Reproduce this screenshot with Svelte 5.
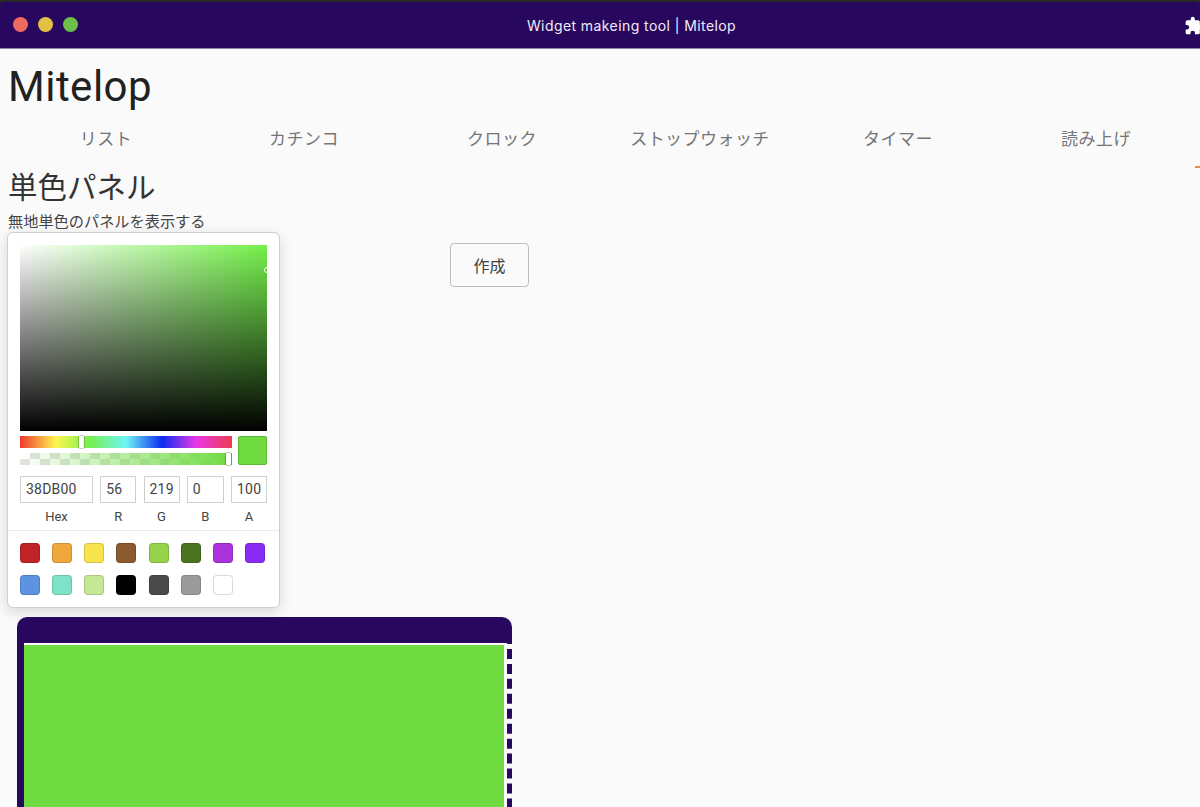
<script>
  const tabs = ["リスト", "カチンコ", "クロック", "ストップウォッチ", "タイマー", "読み上げ"];
  const swatches = [
    "#c02428", "#f0a83c", "#f8e44c", "#8b5a2f", "#94d34a", "#4a7420", "#ac32dc", "#8a2cf6",
    "#5c94e2", "#7ee3c6", "#c4e896", "#000000", "#4a4a4a", "#9b9b9b", "#ffffff",
  ];
  const fields = [
    { label: "Hex", value: "38DB00", width: 73 },
    { label: "R", value: "56", width: 36 },
    { label: "G", value: "219", width: 36 },
    { label: "B", value: "0", width: 37 },
    { label: "A", value: "100", width: 36 },
  ];
</script>

<div class="window">
  <header class="titlebar">
    <div class="lights">
      <span class="light red"></span>
      <span class="light yellow"></span>
      <span class="light green"></span>
    </div>
    <span class="wintitle">Widget makeing tool | Mitelop</span>
    <svg class="puzzle" viewBox="0 0 24 24" width="24" height="24">
      <path fill="#fff" d="M20.5 11H19V7c0-1.1-.9-2-2-2h-4V3.5a2.5 2.5 0 0 0-5 0V5H4c-1.100 0-2 .9-2 2v3.800h1.500a2.700 2.700 0 0 1 0 5.400H2V20c0 1.100.9 2 2 2h3.800v-1.500a2.700 2.700 0 0 1 5.400 0V22H17c1.100 0 2-.9 2-2v-4h1.500a2.500 2.500 0 0 0 0-5z" />
    </svg>
  </header>

  <main class="page">
    <h1>Mitelop</h1>

    <nav class="tabs">
      {#each tabs as t}
        <div class="tab">{t}</div>
      {/each}
    </nav>
    <div class="indicator-track"><span class="indicator"></span></div>

    <section class="panel">
      <h2>単色パネル</h2>
      <p class="desc">無地単色のパネルを表示する</p>

      <div class="actions">
        <button class="create">作成</button>
      </div>

      <div class="preview">
        <div class="preview-head"></div>
        <div class="preview-body">
          <div class="preview-fill"></div>
        </div>
      </div>

      <div class="picker">
        <div class="sat">
          <div class="sat-white"></div>
          <div class="sat-black"></div>
          <span class="sat-pointer"></span>
        </div>

        <div class="sliders">
          <div class="bars">
            <div class="hue"><span class="thumb hue-thumb"></span></div>
            <div class="alpha">
              <div class="alpha-fill"></div>
              <span class="thumb alpha-thumb"></span>
            </div>
          </div>
          <div class="current"></div>
        </div>

        <div class="fields">
          {#each fields as f}
            <div class="field" style="width: {f.width}px">
              <div class="field-input">{f.value}</div>
              <div class="field-label">{f.label}</div>
            </div>
          {/each}
        </div>

        <div class="presets">
          {#each swatches as c}
            <span class="swatch" style="background: {c}"></span>
          {/each}
        </div>
      </div>
    </section>
  </main>
</div>

<style>
  :global(body) {
    margin: 0;
    background: #2a2a2a;
    overflow: hidden;
  }
  .window {
    height: 807px;
    padding-top: 2px;
    box-sizing: border-box;
    overflow: hidden;
    font-family: Roboto, "Noto Sans CJK JP", sans-serif;
    color: #212121;
  }
  .titlebar {
    height: 46px;
    background: #28085f;
    border-radius: 4px 4px 0 0;
    position: relative;
    display: flex;
    align-items: center;
    justify-content: center;
    border-bottom: 1px solid #8f86ad;
  }
  .lights {
    position: absolute;
    left: 13px;
    top: 15px;
    display: flex;
    gap: 10px;
  }
  .light {
    width: 15px;
    height: 15px;
    border-radius: 50%;
  }
  .red {
    background: #ee6a5f;
  }
  .yellow {
    background: #e2c044;
  }
  .green {
    background: #6cc04a;
  }
  .wintitle {
    color: #f0ecf8;
    font-size: 14px;
    letter-spacing: 0.42px;
    margin-left: 63px;
    font-family: Inter, Roboto, sans-serif;
    font-weight: 400;
  }
  .puzzle {
    position: absolute;
    left: 1184px;
    top: 14px;
    width: 20px;
    height: 20px;
  }
  .page {
    background: #fafafa;
    height: 759px;
  }
  h1 {
    margin: 0;
    padding: 14px 0 0 8px;
    font-size: 42px;
    line-height: 48px;
    font-weight: 400;
    letter-spacing: 0.5px;
  }
  .tabs {
    display: grid;
    grid-template-columns: repeat(6, 198px);
    margin-top: 8px;
    padding-left: 7px;
    height: 36px;
  }
  .tab {
    display: flex;
    align-items: center;
    justify-content: center;
    font-size: 17px;
    color: #757575;
    letter-spacing: 0.45px;
  }
  .indicator-track {
    height: 2px;
    position: relative;
    margin-top: 11px;
  }
  .indicator {
    position: absolute;
    left: 1195px;
    top: 0;
    width: 5px;
    height: 2px;
    background: #f28c38;
  }
  .panel {
    position: relative;
    padding-top: 2px;
  }
  h2 {
    margin: 0;
    padding-left: 8px;
    font-size: 29.5px;
    line-height: 36px;
    font-weight: 400;
    color: #333;
  }
  .desc {
    margin: 6px 0 0;
    padding-left: 8px;
    font-size: 15.2px;
    line-height: 20px;
    color: #444;
  }
  .actions {
    padding: 11px 0 0 450px;
  }
  .create {
    width: 79px;
    height: 44px;
    background: #fafafa;
    border: 1px solid #bdbdbd;
    border-radius: 4px;
    font: inherit;
    font-size: 16px;
    color: #424242;
  }
  .preview {
    width: 495px;
    margin: 330px 0 0 17px;
  }
  .preview-head {
    position: relative;
    height: 26px;
    background: #28085f;
    border-radius: 10px 10px 0 0;
  }
  .preview-body {
    height: 309px;
    margin-top: -9px;
    box-sizing: border-box;
    padding: 9px 7px 0;
    border-right: 5px dashed #28085f;
    background: linear-gradient(#28085f, #28085f) left top / 7px 100% no-repeat;
  }
  .preview-fill {
    height: 100%;
    background: #6fdb41;
    border: solid #fff;
    border-width: 2px 2px 0 0;
    margin-right: -6px;
  }
  .picker {
    position: absolute;
    left: 7px;
    top: 64px;
    width: 273px;
    height: 376px;
    box-sizing: border-box;
    background: #fff;
    border: 1px solid #cfcfcf;
    border-radius: 6px;
    box-shadow: 0 4px 14px rgba(0, 0, 0, 0.14);
    padding: 12px 0 0;
  }
  .sat {
    position: relative;
    height: 186px;
    margin: 0 12px;
    background: #74f04a;
  }
  .sat-white {
    position: absolute;
    inset: 0;
    background: linear-gradient(to right, #fff, rgba(255, 255, 255, 0));
  }
  .sat-black {
    position: absolute;
    inset: 0;
    background: linear-gradient(to top, #000, rgba(0, 0, 0, 0));
  }
  .sat-pointer {
    position: absolute;
    right: -3px;
    top: 22px;
    width: 4px;
    height: 4px;
    border: 1.5px solid #fff;
    border-radius: 50%;
  }
  .sliders {
    display: flex;
    gap: 6px;
    margin: 5px 12px 0;
  }
  .bars {
    flex: 1;
    display: flex;
    flex-direction: column;
    gap: 5px;
  }
  .hue,
  .alpha {
    position: relative;
    height: 12px;
  }
  .hue {
    background: linear-gradient(to right, #ee3a2e 0%, #fdf650 17%, #76f050 33%, #70f5f5 50%, #0c2cf0 67%, #e838e8 83%, #ee3a50 100%);
  }
  .alpha {
    background: repeating-conic-gradient(#e2e2e2 0% 25%, #fff 0% 50%) 0 0 / 20px 12px;
  }
  .alpha-fill {
    position: absolute;
    inset: 0;
    background: linear-gradient(to right, rgba(111, 219, 65, 0), #6fdb41);
  }
  .thumb {
    position: absolute;
    top: 0;
    width: 5px;
    height: 12px;
    background: #fff;
    border-radius: 1px;
    box-shadow: 0 0 1px 0.5px rgba(0, 0, 0, 0.4);
  }
  .hue-thumb {
    left: 59px;
  }
  .alpha-thumb {
    right: 1px;
  }
  .current {
    width: 29px;
    height: 29px;
    box-sizing: border-box;
    background: #6fdb41;
    border: 1px solid #5cb836;
    border-radius: 2px;
  }
  .fields {
    display: flex;
    justify-content: space-between;
    margin: 11px 12px 0;
    height: 53px;
  }
  .field-input {
    height: 27px;
    box-sizing: border-box;
    border: 1px solid #cfcfcf;
    font-size: 14px;
    line-height: 25px;
    padding-left: 5px;
    color: #444;
    letter-spacing: 0.2px;
  }
  .field-label {
    text-align: center;
    font-size: 13px;
    color: #444;
    margin-top: 6px;
  }
  .presets {
    display: grid;
    grid-template-columns: repeat(8, 20px);
    column-gap: 12.14px;
    row-gap: 12px;
    margin-top: 1px;
    padding: 12px 12px 0;
    border-top: 1px solid #ececec;
  }
  .swatch {
    width: 20px;
    height: 20px;
    box-sizing: border-box;
    border-radius: 4px;
    border: 1px solid rgba(0, 0, 0, 0.14);
  }
</style>
